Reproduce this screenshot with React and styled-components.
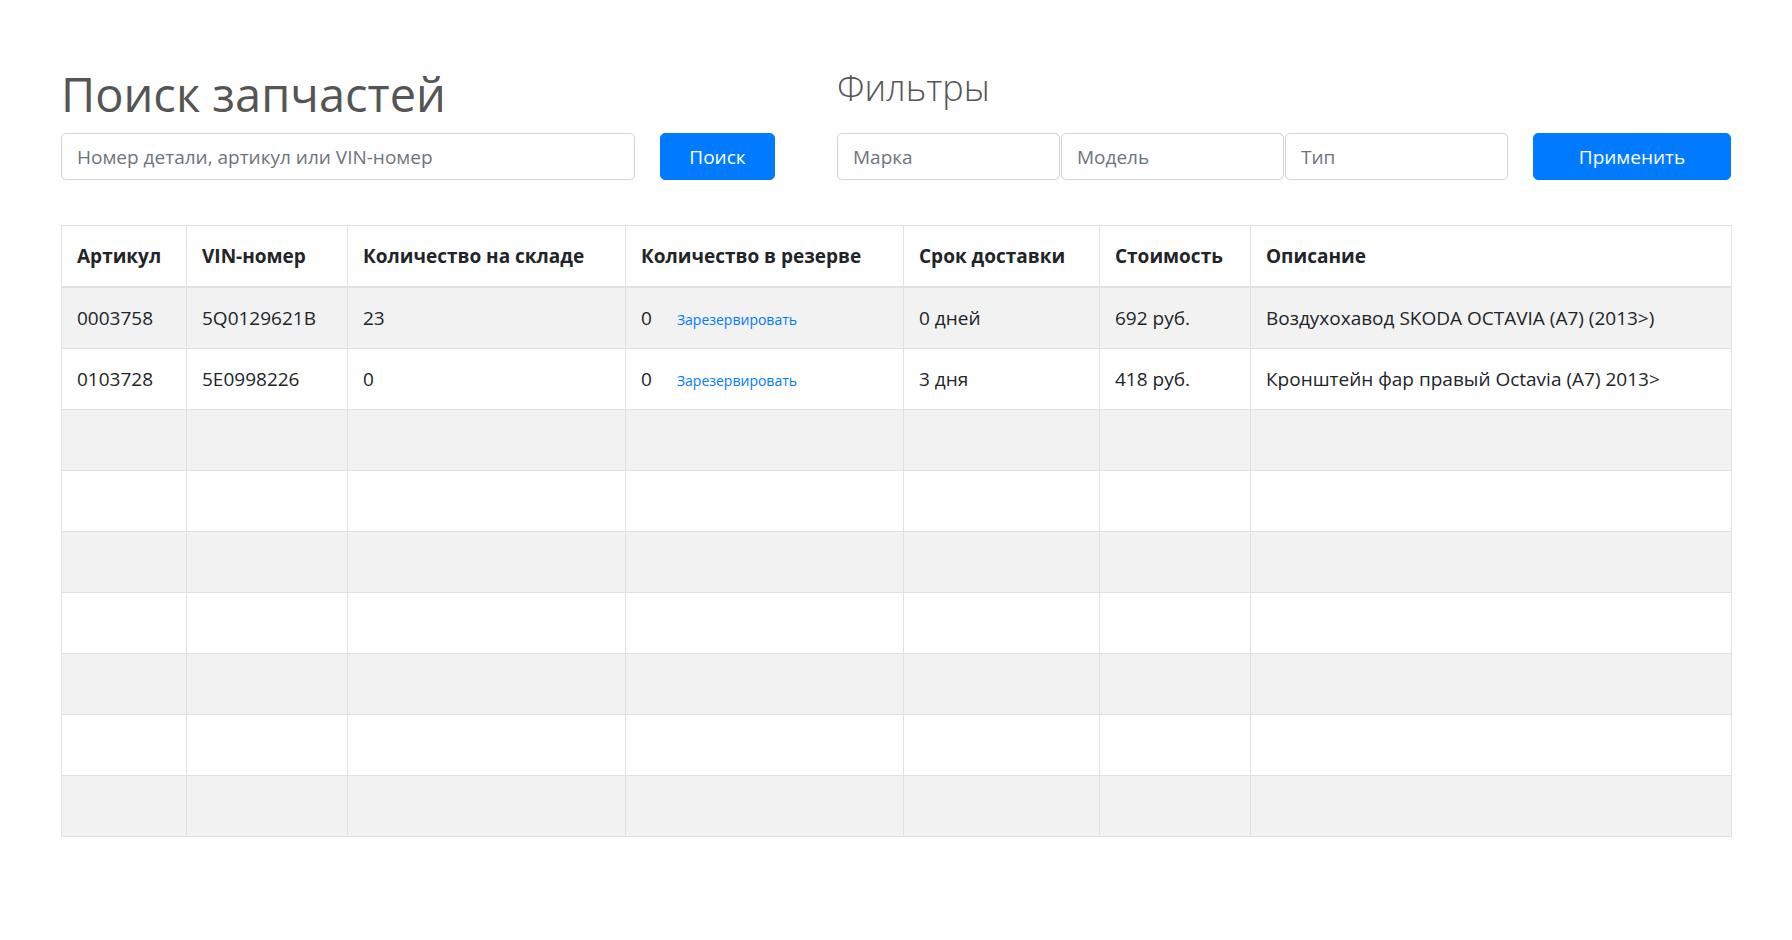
import React from 'react'
import styled, { createGlobalStyle } from 'styled-components'

const GlobalStyle = createGlobalStyle`
  body {
    margin: 0;
    background: #ffffff;
    font-family: "Open Sans", "Noto Sans", sans-serif;
    font-size: 20px;
    line-height: 1.5;
    color: #212529;
  }
  * {
    box-sizing: border-box;
  }
`;

const Page = styled.div`
  padding: 64px 61px 0;
`;

const TopBar = styled.div`
  display: grid;
  grid-template-columns: 714px minmax(0, 1fr);
  column-gap: 62px;
`;

const Column = styled.div`
  display: flex;
  flex-direction: column;
  min-width: 0;
`;

const Title = styled.h1`
  margin: 0 0 9px;
  font-size: 47px;
  line-height: 60px;
  font-weight: 400;
  color: #555555;
`;

const SubTitle = styled.h2`
  margin: 0;
  font-size: 36px;
  line-height: 48px;
  font-weight: 300;
  color: #555555;
`;

const FormRow = styled.div`
  display: flex;
  margin-top: auto;
  gap: 25px;
`;

const InputGroup = styled.div`
  flex: 1;
  min-width: 0;
  display: flex;
  gap: ${(p) => p.$gap || 0}px;
`;

const TextInput = styled.input`
  flex: 1;
  width: 0;
  min-width: 0;
  height: 47px;
  padding: 7px 15px;
  font-family: inherit;
  font-size: 19px;
  color: #495057;
  background: #ffffff;
  border: 1px solid #ced4da;
  border-radius: 5px;
  outline: none;

  &::placeholder {
    color: #6c757d;
  }
`;

const PrimaryButton = styled.button`
  flex: none;
  width: ${(p) => p.$width}px;
  height: 47px;
  padding: 0;
  font-family: inherit;
  font-size: 19px;
  color: #ffffff;
  background: #007bff;
  border: 1px solid #007bff;
  border-radius: 5px;
  cursor: pointer;
`;

const Table = styled.table`
  width: 100%;
  margin-top: 45px;
  border-collapse: collapse;
  table-layout: fixed;
  border: 1px solid #dee2e6;
`;

const Col = styled.col`
  width: ${(p) => p.$width}px;
`;

const Th = styled.th`
  padding: 15px;
  font-size: 19px;
  line-height: 30px;
  font-weight: 700;
  text-align: left;
  white-space: nowrap;
  border: 1px solid #dee2e6;
  border-bottom: 2px solid #dee2e6;
`;

const Row = styled.tr`
  &:nth-child(odd) {
    background: #f2f2f2;
  }
`;

const Td = styled.td`
  height: 61px;
  padding: 15px;
  font-size: 19px;
  line-height: 30px;
  white-space: nowrap;
  border: 1px solid #dee2e6;
`;

const ReserveLink = styled.a`
  margin-left: 25px;
  font-size: 14px;
  line-height: 1;
  color: #007bff;
  text-decoration: none;
  cursor: pointer;
`;

const columns = [
  { title: 'Артикул', width: 125 },
  { title: 'VIN-номер', width: 161 },
  { title: 'Количество на складе', width: 278 },
  { title: 'Количество в резерве', width: 278 },
  { title: 'Срок доставки', width: 196 },
  { title: 'Стоимость', width: 151 },
  { title: 'Описание', width: 481 },
];

const parts = [
  {
    article: '0003758',
    vin: '5Q0129621B',
    stock: '23',
    reserve: '0',
    delivery: '0 дней',
    price: '692 руб.',
    description: 'Воздухохавод SKODA OCTAVIA (A7) (2013>)',
  },
  {
    article: '0103728',
    vin: '5E0998226',
    stock: '0',
    reserve: '0',
    delivery: '3 дня',
    price: '418 руб.',
    description: 'Кронштейн фар правый Octavia (A7) 2013>',
  },
];

const EMPTY_ROWS = 7;

const App = () => {
  return (
    <Page>
      <GlobalStyle />
      <TopBar>
        <Column>
          <Title>Поиск запчастей</Title>
          <FormRow>
            <InputGroup>
              <TextInput placeholder="Номер детали, артикул или VIN-номер" />
            </InputGroup>
            <PrimaryButton $width={115}>Поиск</PrimaryButton>
          </FormRow>
        </Column>
        <Column>
          <SubTitle>Фильтры</SubTitle>
          <FormRow>
            <InputGroup $gap={1}>
              <TextInput placeholder="Марка" />
              <TextInput placeholder="Модель" />
              <TextInput placeholder="Тип" />
            </InputGroup>
            <PrimaryButton $width={198}>Применить</PrimaryButton>
          </FormRow>
        </Column>
      </TopBar>

      <Table>
        <colgroup>
          {columns.map((c) => (
            <Col key={c.title} $width={c.width} />
          ))}
        </colgroup>
        <thead>
          <tr>
            {columns.map((c) => (
              <Th key={c.title}>{c.title}</Th>
            ))}
          </tr>
        </thead>
        <tbody>
          {parts.map((p) => (
            <Row key={p.article}>
              <Td>{p.article}</Td>
              <Td>{p.vin}</Td>
              <Td>{p.stock}</Td>
              <Td>
                {p.reserve}
                <ReserveLink>Зарезервировать</ReserveLink>
              </Td>
              <Td>{p.delivery}</Td>
              <Td>{p.price}</Td>
              <Td>{p.description}</Td>
            </Row>
          ))}
          {Array.from({ length: EMPTY_ROWS }).map((_, i) => (
            <Row key={'empty' + i}>
              {columns.map((c) => (
                <Td key={c.title}>{'\u00A0'}</Td>
              ))}
            </Row>
          ))}
        </tbody>
      </Table>
    </Page>
  )
}

export default App
